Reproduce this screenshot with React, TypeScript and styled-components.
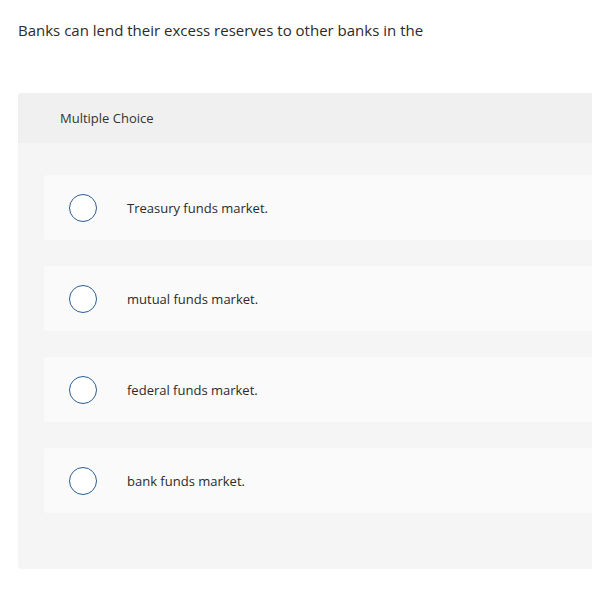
import styled, { createGlobalStyle } from "styled-components";

const GlobalStyle = createGlobalStyle`
  html, body {
    margin: 0;
    padding: 0;
    background: #ffffff;
    overflow: hidden;
  }
  body {
    font-family: "Open Sans", Lato, "Liberation Sans", sans-serif;
    color: #2a2a2a;
  }
`;

const Page = styled.div`
  width: 592px;
  height: 593px;
  padding: 21px 0 0 18px;
  box-sizing: border-box;
`;

const Question = styled.p`
  margin: 0;
  font-size: 15px;
  line-height: 18px;
  color: #2b2b2b;
`;

const Card = styled.div`
  margin-top: 54px;
  width: 600px;
  height: 476px;
  background: #f5f5f5;
  border-radius: 3px;
  display: flex;
  flex-direction: column;
`;

const CardHeader = styled.div`
  height: 50px;
  background: #f0f0f0;
  border-radius: 3px 3px 0 0;
  display: flex;
  align-items: center;
  padding-left: 42px;
  font-size: 13px;
  color: #333;
`;

const Options = styled.div`
  display: flex;
  flex-direction: column;
  gap: 26px;
  padding: 32px 0 0 26px;
`;

const Option = styled.label`
  height: 65px;
  background: #fafafa;
  border-radius: 3px;
  display: flex;
  align-items: center;
  padding-left: 25px;
  gap: 30px;
  font-size: 13px;
  color: #2a2a2a;
  cursor: pointer;
`;

const Radio = styled.span`
  width: 28px;
  height: 28px;
  box-sizing: border-box;
  border: 1.5px solid #2a5f95;
  border-radius: 50%;
  background: #fff;
  flex-shrink: 0;
`;

const choices = [
  "Treasury funds market.",
  "mutual funds market.",
  "federal funds market.",
  "bank funds market.",
];

export default function App() {
  return (
    <>
      <GlobalStyle />
      <Page>
        <Question>Banks can lend their excess reserves to other banks in the</Question>
        <Card>
          <CardHeader>Multiple Choice</CardHeader>
          <Options>
            {choices.map((c) => (
              <Option key={c}>
                <Radio />
                <span>{c}</span>
              </Option>
            ))}
          </Options>
        </Card>
      </Page>
    </>
  );
}
